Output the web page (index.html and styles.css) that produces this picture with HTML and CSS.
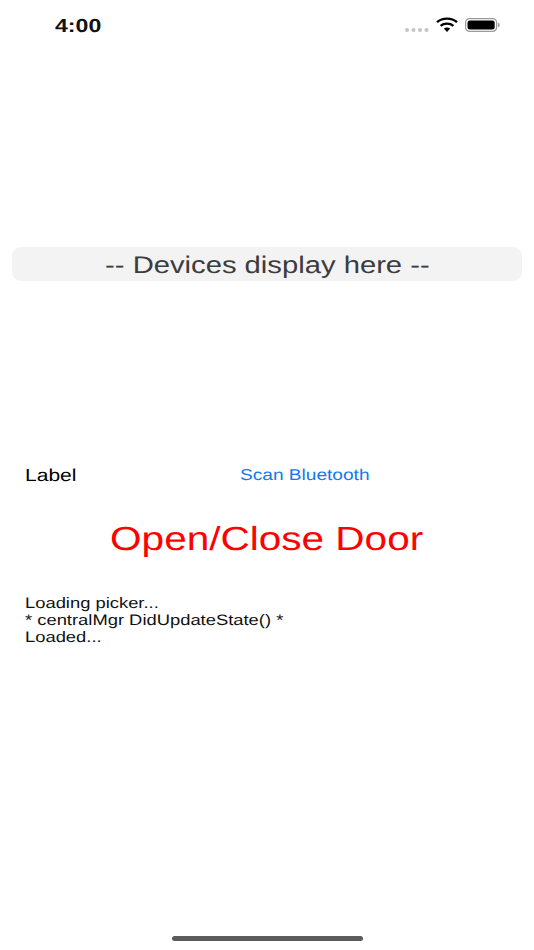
FILE: index.html
```html
<!DOCTYPE html>
<html lang="en">
<head>
<meta charset="utf-8">
<title>Door</title>
<link rel="stylesheet" href="styles.css">
</head>
<body>
<div class="screen">
  <header class="status">
    <span class="time stretch">4:00</span>
    <div class="status-icons">
      <svg class="dots" width="24" height="4" viewBox="0 0 24 4"><g fill="#c4c4c4"><circle cx="2" cy="2" r="2"/><circle cx="8.5" cy="2" r="2"/><circle cx="15" cy="2" r="2"/><circle cx="21.5" cy="2" r="2"/></g></svg>
      <svg class="wifi" width="22" height="15" viewBox="0 0 22 15"><g fill="none" stroke="#000" stroke-width="2.4"><path d="M1 5.2C6.5 .4 15.500 .4 21 5.2"/><path d="M4.600 8.800C8 5.900 14 5.900 17.400 8.800"/></g><path d="M7.800 11.500C9.800 10 12.200 10 14.200 11.500L11 15Z" fill="#000"/></svg>
      <svg class="battery" width="35" height="14" viewBox="0 0 35 14"><rect x=".6" y=".6" width="31" height="12.800" rx="4" fill="none" stroke="#9a9a9a" stroke-width="1.200"/><rect x="2.500" y="2.500" width="27.200" height="9" rx="2.500" fill="#000"/><rect x="33" y="5" width="1.500" height="4" rx=".7" fill="#9a9a9a"/></svg>
    </div>
  </header>
  <div class="picker"><span class="picker-text stretch">-- Devices display here --</span></div>
  <div class="controls">
    <span class="label stretch">Label</span>
    <span class="scan stretch">Scan Bluetooth</span>
  </div>
  <div class="door"><span class="door-text stretch">Open/Close Door</span></div>
  <div class="log">
    <div class="stretch log-line">Loading picker...</div>
    <div class="stretch log-line">* centralMgr DidUpdateState() *</div>
    <div class="stretch log-line">Loaded...</div>
  </div>
  <div class="home-wrap"><div class="home"></div></div>
</div>
</body>
</html>
```
FILE: styles.css
```css
* { box-sizing: border-box; }
html, body { margin: 0; padding: 0; background: #fff; }
body { font-family: "Liberation Sans", Arial, sans-serif; color: #000; text-rendering: geometricPrecision; }
.screen { width: 534px; height: 950px; display: flex; flex-direction: column; overflow: hidden; }
.stretch { display: inline-block; transform: scaleX(1.217); transform-origin: left center; white-space: nowrap; }
.status { height: 50px; padding: 15px 34px 0 55px; display: flex; justify-content: space-between; align-items: flex-start; }
.time { font-size: 19px; line-height: 23px; font-weight: 700; color: #111; }
.status-icons { display: flex; align-items: center; gap: 7px; padding-top: 2px; }
.dots { margin-top: 10px; }
.picker { margin: 197px 12px 0; height: 34px; padding-top: 4px; background: #f3f3f3; border-radius: 9px; display: flex; align-items: center; justify-content: center; }
.picker-text { font-size: 24px; line-height: 30px; color: #3c3c3c; transform-origin: center; }
.controls { margin-top: 182px; height: 24px; display: flex; align-items: center; padding-left: 25px; }
.label { font-size: 17.300px; width: 215px; }
.scan { font-size: 15.700px; padding-top: 1px; color: #1278f0; }
.door { margin-top: 33px; height: 40px; display: flex; justify-content: center; align-items: center; }
.door-text { font-size: 33.300px; color: #f00; transform-origin: center; }
.log { margin-top: 35px; padding-left: 25px; font-size: 15.100px; line-height: 17px; color: #111; }
.log-line { display: block; }
.home-wrap { margin-top: auto; padding-bottom: 9px; display: flex; justify-content: center; }
.home { width: 191px; height: 5px; border-radius: 3px; background: #5c5c5c; }
```
